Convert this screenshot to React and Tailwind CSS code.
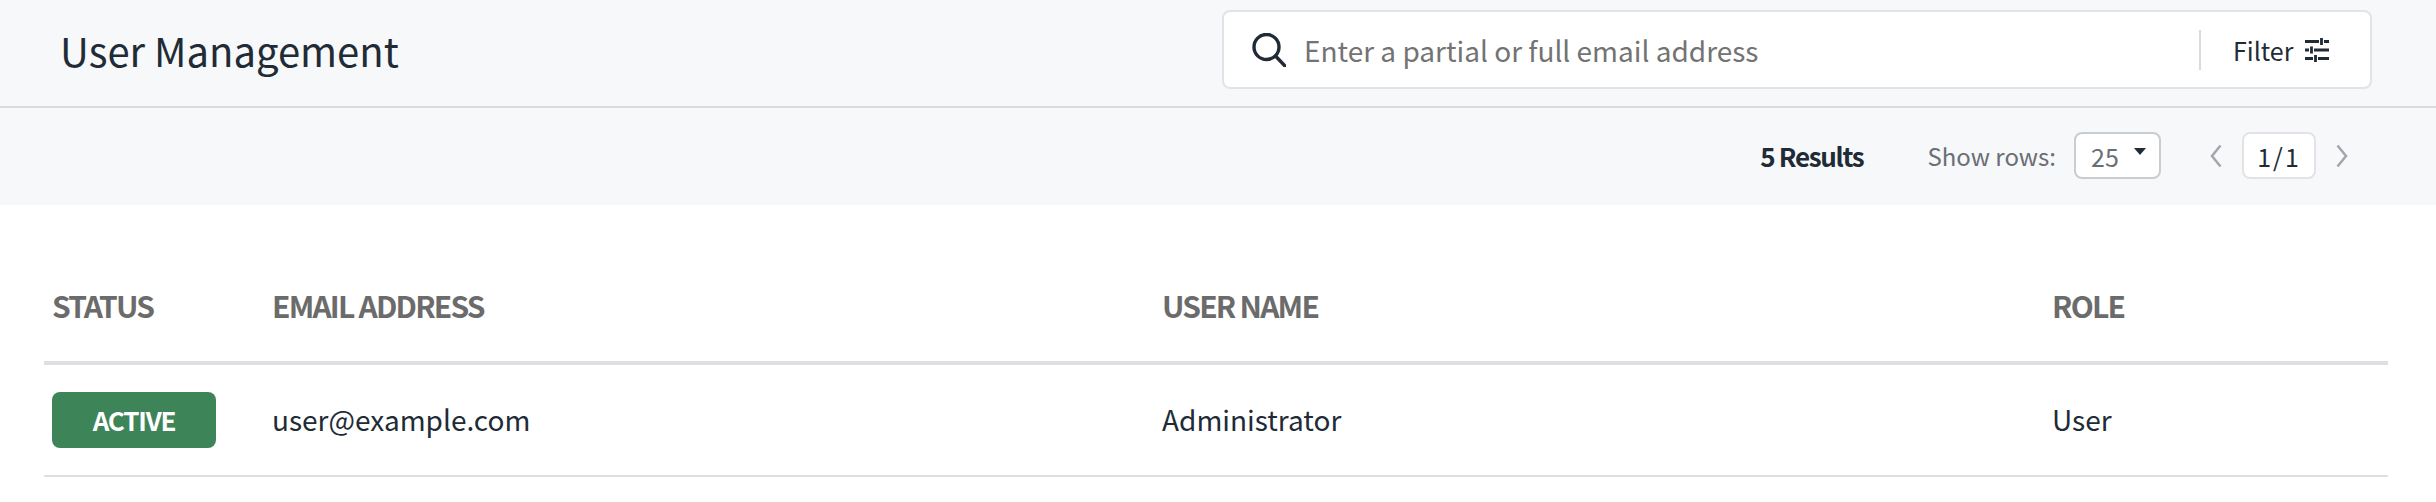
import React from 'react';

const fontFamily = '[font-family:"Noto_Sans_CJK_SC","Noto_Sans",sans-serif]';

const SearchIcon = () => (
  <svg width="34" height="34" viewBox="0 0 34 34" fill="none" stroke="#212b36" strokeWidth="3.4">
    <circle cx="14.5" cy="14" r="12.5" />
    <path d="M23.5 23l9.5 10" strokeLinecap="round" />
  </svg>
);

const FilterIcon = () => (
  <svg width="24" height="24" viewBox="0 0 24 24" fill="none" stroke="#212b36" strokeWidth="2.8">
    <path d="M0 3.5h14M19 3.5h5M16.500 0v7" />
    <path d="M0 12h4M9 12h15M6.500 8.500v7" />
    <path d="M0 20.500h8M13 20.500h11M10.500 17v7" />
  </svg>
);

const Chevron = ({ flip }) => (
  <svg width="12" height="24" viewBox="0 0 12 24" fill="none" stroke="#a3a6aa" strokeWidth="2.5" className={flip ? 'rotate-180' : ''}>
    <path d="M10.500 1.500L2 12l8.500 10.500" />
  </svg>
);

const App = () => {
  return (
    <div className={`w-[2436px] h-[502px] overflow-hidden bg-white ${fontFamily}`}>
      {/* Title bar */}
      <div className="h-[108px] bg-[#f7f8fa] border-b-2 border-[#d9dbde] flex items-center justify-between pl-[60px] pr-[64px]">
        <h1 className="text-[40px] leading-[52px] text-[#212b36] font-normal mb-[7px]">User Management</h1>
        <div className="w-[1150px] h-[79px] mb-[7px] bg-white border-2 border-[#e1e3e6] rounded-[8px] flex items-center pl-[28px]">
          <SearchIcon />
          <span className="ml-[18px] flex-1 text-[28px] leading-[40px] text-[#737373]">
            Enter a partial or full email address
          </span>
          <div className="h-[40px] w-[2px] bg-[#d9dbde]" />
          <div className="flex items-center w-[169px] pl-[32px]">
            <span className="text-[25px] leading-[32px] text-[#212b36]">Filter</span>
            <span className="ml-[12px]"><FilterIcon /></span>
          </div>
        </div>
      </div>

      {/* Results toolbar */}
      <div className="h-[97px] bg-[#f7f8fa] flex items-center justify-end pr-[88px] pb-[2px]">
        <span className="text-[26px] leading-[32px] tracking-[-1.3px] font-bold text-[#212b36]">5 Results</span>
        <span className="ml-[64px] text-[24px] leading-[32px] text-[#6b6f75]">Show rows:</span>
        <div className="ml-[18px] w-[87px] h-[47px] bg-white border-2 border-[#c9ccd1] rounded-[8px] flex items-center pl-[15px] relative">
          <span className="text-[25px] leading-[32px] text-[#6b6f75]">25</span>
          <span className="absolute right-[13px] top-[14px] border-x-[6px] border-x-transparent border-t-[7px] border-t-[#212b36]" />
        </div>
        <span className="ml-[49px]"><Chevron /></span>
        <div className="ml-[20px] w-[74px] h-[47px] bg-white border-2 border-[#e1e3e6] rounded-[8px] flex items-center justify-center">
          <span className="text-[25px] leading-[32px] tracking-[2px] text-[#212b36]">1/1</span>
        </div>
        <span className="ml-[20px]"><Chevron flip /></span>
      </div>

      {/* Users table */}
      <div className="ml-[44px] mr-[48px] mt-[-1px]">
        <div className="grid grid-cols-[220px_890px_890px_340px] h-[161px] items-end border-b-4 border-[#dedfe2] pb-[36px] text-[30px] leading-[40px] tracking-[-1.8px] font-bold text-[#6b6b6b]">
          <div className="pl-[8px]">STATUS</div>
          <div className="pl-[8px]">EMAIL ADDRESS</div>
          <div className="pl-[8px]">USER NAME</div>
          <div className="pl-[8px]">ROLE</div>
        </div>
        <div className="grid grid-cols-[220px_890px_890px_340px] h-[112px] items-center border-b-2 border-[#dedfe2] text-[28px] leading-[40px] text-[#212b36]">
          <div className="pl-[8px]">
            <span className="flex items-center justify-center w-[164px] h-[56px] rounded-[8px] bg-[#3d8558] text-white text-[26px] leading-[32px] tracking-[-1.2px] font-bold">
              ACTIVE
            </span>
          </div>
          <div className="pl-[8px] mb-[2px]">user@example.com</div>
          <div className="pl-[8px] mb-[2px]">Administrator</div>
          <div className="pl-[8px] mb-[2px]">User</div>
        </div>
      </div>
    </div>
  );
};

export default App;
